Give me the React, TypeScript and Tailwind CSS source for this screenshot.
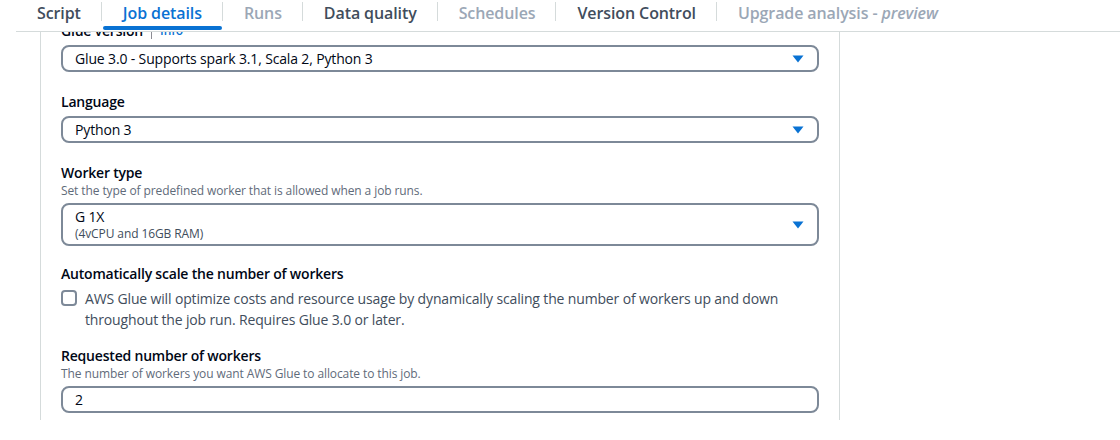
import React from 'react'

const tabs = [
  { id: 'script', label: 'Script', state: 'normal' },
  { id: 'job', label: 'Job details', state: 'active' },
  { id: 'runs', label: 'Runs', state: 'disabled' },
  { id: 'dq', label: 'Data quality', state: 'normal' },
  { id: 'schedules', label: 'Schedules', state: 'disabled' },
  { id: 'vc', label: 'Version Control', state: 'normal' },
  { id: 'upgrade', label: 'Upgrade analysis - ', state: 'disabled', italic: 'preview' },
]

function Caret() {
  return (
    <svg width="12" height="8" viewBox="0 0 12 8" className="shrink-0">
      <path d="M0.5 0.5 L11.5 0.5 L6 7.5 Z" fill="#0972d3" />
    </svg>
  )
}

function Select({ value, sub }: { value: string; sub?: string }) {
  return (
    <div
      className={
        sub
          ? 'mt-1 flex h-[43px] items-center rounded-lg border-2 border-[#7d8998] bg-white pl-3 pr-[13px]'
          : 'mt-1 flex h-[27px] items-center rounded-lg border-2 border-[#7d8998] bg-white pl-3 pr-[13px]'
      }
    >
      <div className="flex-1">
        <div className="text-sm leading-[18px] tracking-[-0.15px] text-[#000716]">{value}</div>
        {sub && <div className="text-xs leading-4 tracking-[-0.1px] text-[#414d5c]">{sub}</div>}
      </div>
      <Caret />
    </div>
  )
}

function Label({ children }: { children: React.ReactNode }) {
  return <div className="text-sm font-semibold leading-5 tracking-[-0.2px] text-[#000716]">{children}</div>
}

function Desc({ children }: { children: React.ReactNode }) {
  return <div className="text-xs leading-4 tracking-[-0.1px] text-[#5f6b7a]">{children}</div>
}

export default function App() {
  return (
    <div className="h-[440px] w-[1120px] overflow-hidden bg-white font-['Open_Sans',sans-serif]">
      {/* Tabs */}
      <div className="ml-4 flex h-[32px] border-b border-[#d5dbdb]">
        {tabs.map((tab, i) => (
          <div key={tab.id} className="flex h-[31px]">
            {i > 0 && <div className="mt-[2px] h-[19px] w-px bg-[#d5dbdb]" />}
            <div className="relative flex h-[31px] items-start pl-[21px] pr-5 pt-[3px]">
              <span
                className={
                  tab.state === 'active'
                    ? 'text-base font-semibold leading-5 tracking-[-0.1px] text-[#0972d3]'
                    : tab.state === 'disabled'
                      ? 'text-base font-semibold leading-5 tracking-[-0.1px] text-[#9ba7b6]'
                      : 'text-base font-semibold leading-5 tracking-[-0.1px] text-[#414d5c]'
                }
              >
                {tab.label}
                {tab.italic && <i>{tab.italic}</i>}
              </span>
              {tab.state === 'active' && (
                <div className="absolute bottom-[1px] left-[1px] right-0 h-1 rounded-full bg-[#0972d3]" />
              )}
            </div>
          </div>
        ))}
      </div>

      {/* Body */}
      <div className="flex h-[388px]">
        <div className="ml-10 w-[800px] overflow-hidden border-x border-[#d5dbdb] px-5">
          <div className="-mt-[11px] flex flex-col">
            {/* Glue version */}
            <div className="flex items-center">
              <Label>Glue version</Label>
              <div className="mx-2 h-4 w-px bg-[#8c8c94]" />
              <span className="text-xs font-semibold text-[#0972d3]">Info</span>
            </div>
            <Select value="Glue 3.0 - Supports spark 3.1, Scala 2, Python 3" />

            <div className="mt-5">
              <Label>Language</Label>
              <Select value="Python 3" />
            </div>

            <div className="mt-5">
              <Label>Worker type</Label>
              <Desc>Set the type of predefined worker that is allowed when a job runs.</Desc>
              <Select value="G 1X" sub="(4vCPU and 16GB RAM)" />
            </div>

            <div className="mt-[18px]">
              <Label>Automatically scale the number of workers</Label>
              <div className="mt-1 flex gap-2">
                <div className="mt-[2px] h-4 w-4 shrink-0 rounded-[4px] border-2 border-[#7d8998] bg-white" />
                <div className="text-sm leading-[21px] tracking-[-0.15px] text-[#414d5c]">
                  AWS Glue will optimize costs and resource usage by dynamically scaling the number of workers up and down
                  <br />
                  throughout the job run. Requires Glue 3.0 or later.
                </div>
              </div>
            </div>

            <div className="mt-4">
              <Label>Requested number of workers</Label>
              <Desc>The number of workers you want AWS Glue to allocate to this job.</Desc>
              <div className="mt-1 flex h-[27px] items-center rounded-lg border-2 border-[#7d8998] bg-white px-3">
                <span className="text-sm leading-[18px] text-[#000716]">2</span>
              </div>
            </div>
          </div>
        </div>
      </div>
    </div>
  )
}
